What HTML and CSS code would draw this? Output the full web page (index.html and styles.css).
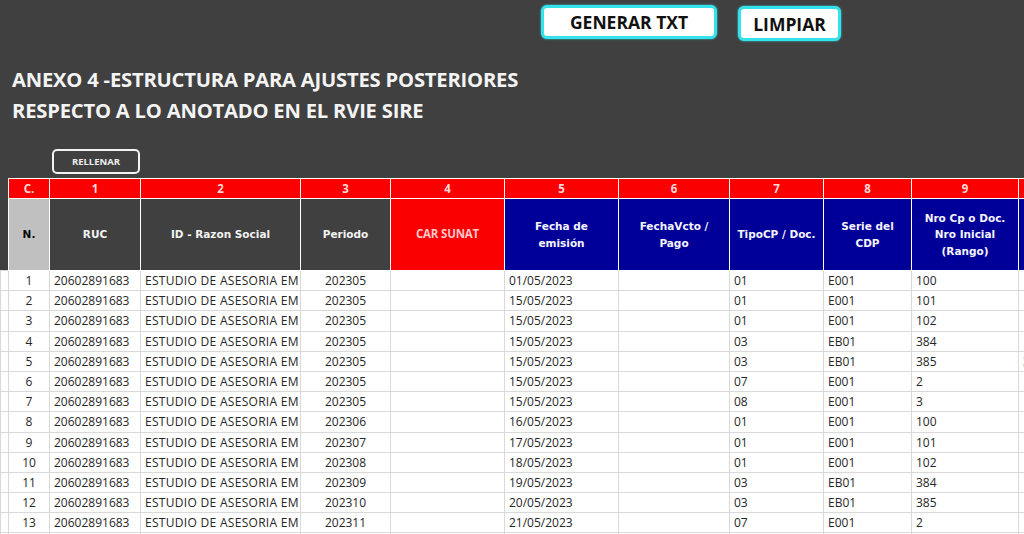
FILE: index.html
```html
<!DOCTYPE html>
<html lang="es">
<head>
<meta charset="utf-8">
<title>Anexo 4</title>
<link rel="stylesheet" href="styles.css">
</head>
<body>
<div class="page">
  <div class="top">
    <div class="actions">
      <button class="btn-main btn-gen">GENERAR TXT</button>
      <button class="btn-main btn-clear">LIMPIAR</button>
    </div>
    <h1 class="title">ANEXO 4 -ESTRUCTURA PARA AJUSTES POSTERIORES<br>RESPECTO A LO ANOTADO EN EL RVIE SIRE</h1>
    <div class="fill-row"><button class="btn-fill">RELLENAR</button></div>
  </div>
  <table class="grid">
    <colgroup>
      <col class="w-sp"><col class="w-c"><col class="w-1"><col class="w-2"><col class="w-3"><col class="w-4"><col class="w-5"><col class="w-6"><col class="w-7"><col class="w-8"><col class="w-9"><col class="w-10">
    </colgroup>
    <thead>
      <tr class="nums">
        <th class="sp"></th><th>C.</th><th>1</th><th>2</th><th>3</th><th>4</th><th>5</th><th>6</th><th>7</th><th>8</th><th>9</th><th>10</th>
      </tr>
      <tr class="heads">
        <th class="sp"></th>
        <th class="h-gray">N.</th>
        <th class="h-dark">RUC</th>
        <th class="h-dark">ID - Razon Social</th>
        <th class="h-dark">Periodo</th>
        <th class="h-red">CAR SUNAT</th>
        <th class="h-blue">Fecha de<br>emisión</th>
        <th class="h-blue">FechaVcto /<br>Pago</th>
        <th class="h-blue">TipoCP / Doc.</th>
        <th class="h-blue">Serie del<br>CDP</th>
        <th class="h-blue">Nro Cp o Doc.<br>Nro Inicial<br>(Rango)</th>
        <th class="h-blue">Nro Final<br>(Rango)</th>
      </tr>
    </thead>
    <tbody>
      <tr><td></td><td class="c">1</td><td>20602891683</td><td class="clip">ESTUDIO DE ASESORIA EM</td><td class="c">202305</td><td></td><td>01/05/2023</td><td></td><td>01</td><td>E001</td><td>100</td><td></td></tr>
      <tr><td></td><td class="c">2</td><td>20602891683</td><td class="clip">ESTUDIO DE ASESORIA EM</td><td class="c">202305</td><td></td><td>15/05/2023</td><td></td><td>01</td><td>E001</td><td>101</td><td></td></tr>
      <tr><td></td><td class="c">3</td><td>20602891683</td><td class="clip">ESTUDIO DE ASESORIA EM</td><td class="c">202305</td><td></td><td>15/05/2023</td><td></td><td>01</td><td>E001</td><td>102</td><td></td></tr>
      <tr><td></td><td class="c">4</td><td>20602891683</td><td class="clip">ESTUDIO DE ASESORIA EM</td><td class="c">202305</td><td></td><td>15/05/2023</td><td></td><td>03</td><td>EB01</td><td>384</td><td></td></tr>
      <tr><td></td><td class="c">5</td><td>20602891683</td><td class="clip">ESTUDIO DE ASESORIA EM</td><td class="c">202305</td><td></td><td>15/05/2023</td><td></td><td>03</td><td>EB01</td><td>385</td><td>390</td></tr>
      <tr><td></td><td class="c">6</td><td>20602891683</td><td class="clip">ESTUDIO DE ASESORIA EM</td><td class="c">202305</td><td></td><td>15/05/2023</td><td></td><td>07</td><td>E001</td><td>2</td><td></td></tr>
      <tr><td></td><td class="c">7</td><td>20602891683</td><td class="clip">ESTUDIO DE ASESORIA EM</td><td class="c">202305</td><td></td><td>15/05/2023</td><td></td><td>08</td><td>E001</td><td>3</td><td></td></tr>
      <tr><td></td><td class="c">8</td><td>20602891683</td><td class="clip">ESTUDIO DE ASESORIA EM</td><td class="c">202306</td><td></td><td>16/05/2023</td><td></td><td>01</td><td>E001</td><td>100</td><td></td></tr>
      <tr><td></td><td class="c">9</td><td>20602891683</td><td class="clip">ESTUDIO DE ASESORIA EM</td><td class="c">202307</td><td></td><td>17/05/2023</td><td></td><td>01</td><td>E001</td><td>101</td><td></td></tr>
      <tr><td></td><td class="c">10</td><td>20602891683</td><td class="clip">ESTUDIO DE ASESORIA EM</td><td class="c">202308</td><td></td><td>18/05/2023</td><td></td><td>01</td><td>E001</td><td>102</td><td></td></tr>
      <tr><td></td><td class="c">11</td><td>20602891683</td><td class="clip">ESTUDIO DE ASESORIA EM</td><td class="c">202309</td><td></td><td>19/05/2023</td><td></td><td>03</td><td>EB01</td><td>384</td><td></td></tr>
      <tr><td></td><td class="c">12</td><td>20602891683</td><td class="clip">ESTUDIO DE ASESORIA EM</td><td class="c">202310</td><td></td><td>20/05/2023</td><td></td><td>03</td><td>EB01</td><td>385</td><td></td></tr>
      <tr><td></td><td class="c">13</td><td>20602891683</td><td class="clip">ESTUDIO DE ASESORIA EM</td><td class="c">202311</td><td></td><td>21/05/2023</td><td></td><td>07</td><td>E001</td><td>2</td><td></td></tr>
      <tr><td></td><td class="c">14</td><td>20602891683</td><td class="clip">ESTUDIO DE ASESORIA EM</td><td class="c">202312</td><td></td><td>22/05/2023</td><td></td><td>08</td><td>E001</td><td>3</td><td></td></tr>
    </tbody>
  </table>
</div>
</body>
</html>
```
FILE: styles.css
```css
html, body {
  margin: 0;
  padding: 0;
  background: #404040;
  overflow: hidden;
}
.page {
  width: 1024px;
  height: 534px;
  overflow: hidden;
  background: #404040;
}
.top {
  height: 178px;
  display: flex;
  flex-direction: column;
}
.actions {
  display: flex;
  align-items: flex-start;
  gap: 21px;
  padding: 5px 0 0 541px;
  height: 36px;
}
.btn-main {
  background: #ffffff;
  border: 3px solid #33e2ea;
  border-radius: 6px;
  font-family: "Open Sans", sans-serif;
  font-weight: 700;
  font-size: 17.5px;
  color: #111111;
  padding: 0;
  box-shadow: 0 0 2px #33e2ea;
}
.btn-gen {
  width: 176px;
  height: 34px;
  line-height: 26px;
}
.btn-clear {
  width: 103px;
  height: 35px;
  margin-top: 1px;
  line-height: 28px;
}
.title {
  margin: 23px 0 0 12px;
  font-family: "Open Sans", sans-serif;
  font-weight: 700;
  font-size: 20.2px;
  line-height: 31px;
  color: #f4f4f4;
  letter-spacing: -0.2px;
}
.fill-row {
  padding: 23px 0 0 52px;
}
.btn-fill {
  width: 88px;
  height: 25px;
  background: #404040;
  border: 2px solid #f2f2f2;
  border-radius: 5px;
  color: #eeeeee;
  font-family: "Open Sans", sans-serif;
  font-weight: 700;
  font-size: 9.5px;
  padding: 0;
}
.grid {
  border-collapse: collapse;
  table-layout: fixed;
  width: 1118px;
}
.w-sp { width: 8px; }
.w-c { width: 41px; }
.w-1 { width: 91px; }
.w-2 { width: 160px; }
.w-3 { width: 90px; }
.w-4 { width: 114px; }
.w-5 { width: 114px; }
.w-6 { width: 111px; }
.w-7 { width: 94px; }
.w-8 { width: 88px; }
.w-9 { width: 107px; }
.w-10 { width: 100px; }

.grid th {
  padding: 0;
  border: 1px solid #ffffff;
  font-weight: 700;
  text-align: center;
  overflow: hidden;
  white-space: nowrap;
}
.grid th.sp {
  background: #404040;
  border: none;
}
.nums th {
  height: 19px;
  background: #fb0000;
  color: #ffd9d9;
  font-family: "Open Sans", sans-serif;
  font-size: 11.5px;
  line-height: 19px;
}
.heads th {
  height: 71px;
  font-family: "DejaVu Sans", sans-serif;
  font-size: 10.5px;
  line-height: 16.5px;
}
.h-gray { background: #c0c0c0; color: #0a0a0a; }
.h-dark { background: #404040; color: #f2f2f2; }
.h-red {
  background: #fb0000;
  color: #ffc9c9;
  font-family: "Open Sans", sans-serif !important;
  font-size: 11.5px !important;
  letter-spacing: -0.2px;
}
.h-blue { background: #000099; color: #f4f4ff; }

.grid td {
  height: 19.2px;
  padding: 0 0 0 4px;
  background: #ffffff;
  border: 1px solid #d9d9d9;
  font-family: "Open Sans", sans-serif;
  font-size: 12px;
  line-height: 19px;
  color: #262626;
  white-space: nowrap;
  overflow: hidden;
}
.grid td.c {
  text-align: center;
  padding: 0;
}
.grid td.clip {
  text-overflow: clip;
  letter-spacing: 0.3px;
}
```
